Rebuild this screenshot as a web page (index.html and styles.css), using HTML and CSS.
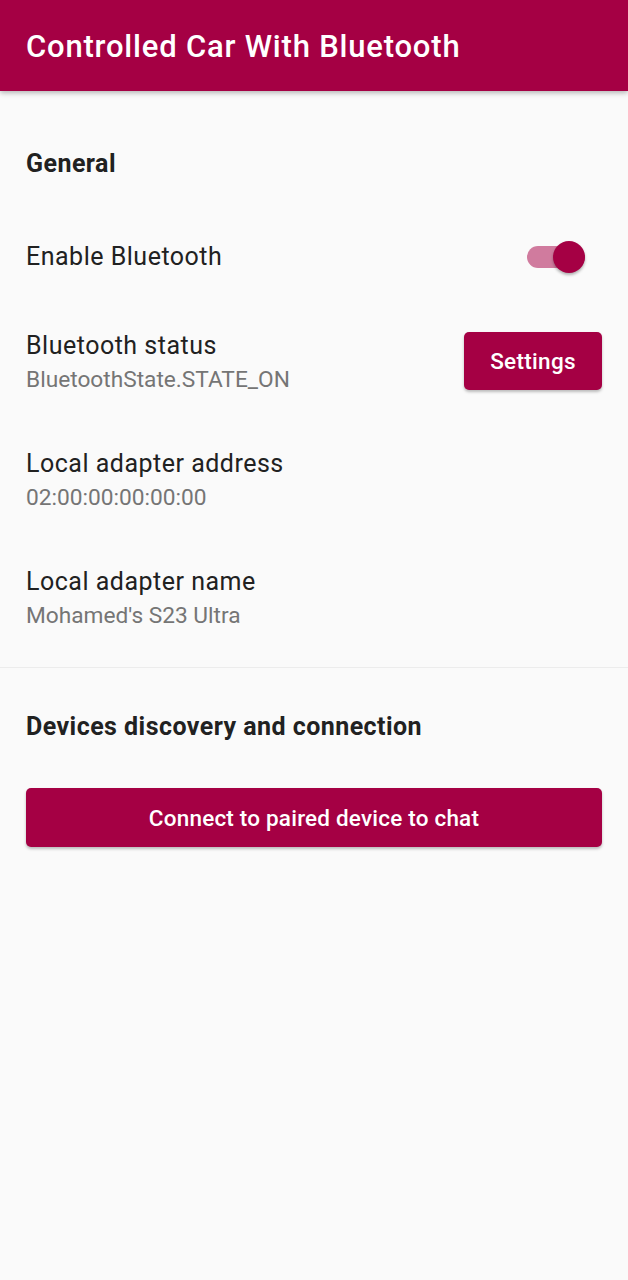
FILE: index.html
```html
<!DOCTYPE html>
<html>
<head>
<meta charset="utf-8">
<link rel="stylesheet" href="styles.css">
</head>
<body>
<header class="appbar"><h1 class="appbar-title">Controlled Car With Bluetooth</h1></header>
<main class="content">
  <h2 class="category category-first">General</h2>
  <div class="pref pref-switch">
    <div class="pref-title">Enable Bluetooth</div>
    <div class="switch"><div class="switch-track"></div><div class="switch-thumb"></div></div>
  </div>
  <div class="pref pref-two">
    <div class="pref-text">
      <div class="pref-title">Bluetooth status</div>
      <div class="pref-sub">BluetoothState.STATE_ON</div>
    </div>
    <button class="btn btn-small">Settings</button>
  </div>
  <div class="pref pref-two">
    <div class="pref-text">
      <div class="pref-title">Local adapter address</div>
      <div class="pref-sub">02:00:00:00:00:00</div>
    </div>
  </div>
  <div class="pref pref-two">
    <div class="pref-text">
      <div class="pref-title">Local adapter name</div>
      <div class="pref-sub">Mohamed's S23 Ultra</div>
    </div>
  </div>
  <hr class="divider">
  <h2 class="category category-second">Devices discovery and connection</h2>
  <div class="wide-wrap"><button class="btn btn-wide">Connect to paired device to chat</button></div>
</main>
</body>
</html>
```
FILE: styles.css
```css
html, body { margin: 0; padding: 0; }
body {
  background: #fafafa;
  font-family: Roboto, "Noto Sans", sans-serif;
  width: 628px;
  height: 1280px;
  overflow: hidden;
}
.appbar {
  height: 91px;
  background: #a50044;
  box-shadow: 0 2px 5px rgba(0,0,0,0.28);
  display: flex;
  align-items: center;
  padding: 0 26px;
  position: relative;
  z-index: 1;
}
.appbar-title {
  margin: 0;
  color: #fff;
  font-size: 31px;
  letter-spacing: 0.8px;
  font-weight: 500;
  line-height: 36px;
  padding-top: 2px;
}
.content { display: flex; flex-direction: column; }
.category {
  margin: 0;
  padding: 0 26px;
  font-size: 25px;
  letter-spacing: 0.45px;
  font-weight: 700;
  line-height: 32px;
  color: #212121;
}
.category-first { padding-top: 57px; padding-bottom: 32px; }
.category-second { padding-top: 43px; padding-bottom: 45px; }
.pref {
  display: flex;
  align-items: center;
  justify-content: space-between;
  padding: 0 26px 0 26px;
}
.pref-switch { height: 90px; padding-right: 43px; }
.pref-two { height: 118px; box-sizing: border-box; padding-top: 28px; padding-bottom: 22px; }
.pref-text { display: flex; flex-direction: column; }
.pref-title {
  font-size: 25px;
  letter-spacing: 0.5px;
  line-height: 32px;
  color: #212121;
}
.pref-sub {
  font-size: 22.7px;
  line-height: 36px;
  color: #757575;
}
.switch { position: relative; width: 58px; height: 32px; }
.switch-track {
  position: absolute; left: 0; top: 5px;
  width: 58px; height: 22px; border-radius: 11px;
  background: #d07b9e;
}
.switch-thumb {
  position: absolute; right: 0; top: 0;
  width: 32px; height: 32px; border-radius: 50%;
  background: #a50044;
  box-shadow: 0 2px 3px rgba(0,0,0,0.3);
}
.btn {
  border: none;
  background: #a50044;
  color: #fff;
  font-family: Roboto, "Noto Sans", sans-serif;
  font-weight: 500;
  font-size: 22.5px;
  letter-spacing: 0.3px;
  border-radius: 5px;
  box-shadow: 0 2px 3px rgba(0,0,0,0.25);
  padding: 0;
}
.btn-small { width: 138px; height: 58px; margin-top: -6px; }
.divider {
  margin: 11px 0 0;
  border: none;
  height: 1px;
  background: #ececec;
}
.wide-wrap { padding: 0 26px; }
.btn-wide { width: 100%; height: 59px; display: block; letter-spacing: 0.2px; }
```
